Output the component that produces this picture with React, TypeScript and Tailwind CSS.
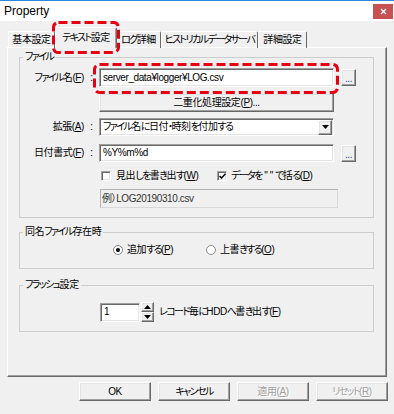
import React from "react";

const sunken =
  "border border-t-[#a0a0a0] border-l-[#a0a0a0] border-r-white border-b-white shadow-[inset_1px_1px_0_#696969,inset_-1px_-1px_0_#e3e3e3]";
const raised =
  "border border-t-white border-l-white border-r-[#696969] border-b-[#696969] shadow-[inset_-1px_-1px_0_#a0a0a0,inset_1px_1px_0_#e3e3e3]";

const rootCls =
  'relative w-[394px] h-[414px] bg-[#f0f0f0] overflow-hidden text-[10px] leading-[14px] tracking-[-0.4px] text-black font-["Liberation_Sans","Noto_Sans_CJK_JP",sans-serif] [font-feature-settings:"palt"]';

/* Japanese text: kana runs are set tighter, like the narrow UI font of the original */
function J({ t }: { t: string }) {
  const parts = t.split(/([\u3040-\u30ff]+)/);
  return (
    <>
      {parts.map((p, i) =>
        /[\u3040-\u30ff]/.test(p) ? (
          <span key={i} className="tracking-[-1.6px]">
            {p}
          </span>
        ) : (
          <React.Fragment key={i}>{p}</React.Fragment>
        )
      )}
    </>
  );
}

function U({ children }: { children: React.ReactNode }) {
  return <span className="underline underline-offset-[1px]">{children}</span>;
}

function Down() {
  return (
    <svg width="7" height="4" viewBox="0 0 7 4">
      <path d="M0 0H7L3.5 4Z" fill="#000" />
    </svg>
  );
}
function Up() {
  return (
    <svg width="7" height="4" viewBox="0 0 7 4">
      <path d="M0 4H7L3.5 0Z" fill="#000" />
    </svg>
  );
}

export default function App() {
  return (
    <div className={rootCls}>
      <div className="h-px bg-[#2b88d8]" />
      {/* title bar */}
      <div className="h-[20px] bg-white flex items-start justify-between">
        <span className="pl-[4px] pt-[3px] text-[12px] leading-[14px] tracking-normal">Property</span>
        <div className="mt-[3px] mr-[1px] w-[20px] h-[15px] bg-[#c75050] flex items-center justify-center">
          <svg width="7" height="7" viewBox="0 0 7 7">
            <path d="M1 1L6 6M6 1L1 6" stroke="white" strokeWidth="1.4" />
          </svg>
        </div>
      </div>

      {/* tabs */}
      <div className="flex items-end h-[27px] pl-[8px] whitespace-nowrap">
        <div className="w-[47px] h-[17px] flex items-start justify-center pt-[1px] border-t border-l border-r border-t-white border-l-white border-r-[#696969] rounded-t-[2px]">
          基本設定
        </div>
        <div className="relative z-10 w-[62px] h-[21px] flex items-start justify-center pt-[3px] bg-[#f0f0f0] border-t border-l border-r border-t-white border-l-white border-r-[#696969] rounded-t-[2px] shadow-[inset_-1px_0_0_#a0a0a0]">
          <J t="テキスト設定" />
        </div>
        <div className="w-[44px] h-[17px] flex items-start justify-center pt-[1px] border-t border-r border-t-white border-r-[#696969] rounded-t-[2px]">
          <J t="ログ詳細" />
        </div>
        <div className="w-[97px] h-[17px] flex items-start justify-center pt-[1px] border-t border-l border-r border-t-white border-l-white border-r-[#696969] rounded-t-[2px]">
          <J t="ヒストリカルデータサーバ" />
        </div>
        <div className="w-[49px] h-[17px] flex items-start justify-center pt-[1px] border-t border-l border-r border-t-white border-l-white border-r-[#696969] rounded-t-[2px]">
          詳細設定
        </div>
      </div>

      {/* panel */}
      <div className="-mt-[1px] ml-[7px] w-[380px] h-[330px] border border-t-white border-l-white border-r-[#696969] border-b-[#696969] shadow-[inset_-1px_-1px_0_#a0a0a0]">
        {/* File group */}
        <fieldset className="mt-[2px] ml-[11px] w-[355px] border border-[#cdcdcd] pb-[9px]">
          <legend className="ml-[3px] px-[2px] leading-[14px]">
            <J t="ファイル" />
          </legend>
          <div className="mt-[4px] flex items-center h-[19px]">
            <span className="w-[64px] text-right whitespace-nowrap">
              <J t="ファイル名" />(<U>F</U>)
            </span>
            <span className="w-[15px] text-center">:</span>
            <div className={`w-[235px] h-[19px] bg-white px-[3px] flex items-center ${sunken}`}>
              server_data¥logger¥LOG.csv
            </div>
            <div className={`ml-[7px] w-[15px] h-[17px] flex items-end justify-center pb-[2px] leading-[8px] text-[#1c3f8f] ${raised}`}>
              ...
            </div>
          </div>
          <div className={`mt-[6px] ml-[79px] w-[235px] h-[19px] flex items-center justify-center ${raised}`}>
            二重化処理設定(<U>P</U>)...
          </div>
          <div className="mt-[6px] flex items-center h-[18px]">
            <span className="w-[64px] text-right">
              拡張(<U>A</U>)
            </span>
            <span className="w-[15px] text-center">:</span>
            <div className={`w-[235px] h-[18px] bg-white flex items-center justify-between pl-[3px] pr-[1px] ${sunken}`}>
              <span className="whitespace-nowrap">
                <J t="ファイル名に日付・時刻を付加する" />
              </span>
              <div className={`w-[14px] h-[15px] flex items-center justify-center bg-[#f0f0f0] ${raised}`}>
                <Down />
              </div>
            </div>
          </div>
          <div className="mt-[8px] flex items-center h-[18px]">
            <span className="w-[64px] text-right whitespace-nowrap">
              日付書式(<U>F</U>)
            </span>
            <span className="w-[15px] text-center">:</span>
            <div className={`w-[235px] h-[18px] bg-white px-[3px] flex items-center ${sunken}`}>%Y%m%d</div>
            <div className={`ml-[7px] w-[15px] h-[17px] flex items-end justify-center pb-[2px] leading-[8px] text-[#1c3f8f] ${raised}`}>
              ...
            </div>
          </div>
          <div className="mt-[7px] flex items-center h-[14px] whitespace-nowrap">
            <div className={`ml-[81px] w-[10px] h-[10px] bg-white ${sunken}`} />
            <span className="ml-[5px] w-[101px]">
              <J t="見出しを書き出す" />(<U>W</U>)
            </span>
            <div className={`w-[10px] h-[10px] bg-white flex items-center justify-center ${sunken}`}>
              <svg width="7" height="6" viewBox="0 0 7 6">
                <path d="M0.5 3L2.5 5L6.5 0.8" stroke="#000" strokeWidth="1.5" fill="none" />
              </svg>
            </div>
            <span className="ml-[4px]">
              <J t="データを" /> " " <J t="で括る" />(<U>D</U>)
            </span>
          </div>
          <div className="mt-[6px] ml-[80px] w-[238px] h-[19px] flex items-center pl-[1px] text-[#333] border border-[#d9d9d9] border-t-[#b4b4b4] border-l-[#b4b4b4] whitespace-nowrap">
            例）LOG20190310.csv
          </div>
        </fieldset>

        {/* Same name group */}
        <fieldset className="mt-[7px] ml-[11px] w-[355px] border border-[#cdcdcd] pb-[11px]">
          <legend className="ml-[3px] px-[2px] leading-[14px]">
            <J t="同名ファイル存在時" />
          </legend>
          <div className="mt-[4px] flex items-center h-[14px] whitespace-nowrap">
            <div className="ml-[93px] w-[10px] h-[10px] rounded-full bg-white border border-[#8a8a8a] flex items-center justify-center">
              <div className="w-[4px] h-[4px] rounded-full bg-black" />
            </div>
            <span className="ml-[4px] w-[79px]">
              <J t="追加する" />(<U>P</U>)
            </span>
            <div className="w-[10px] h-[10px] rounded-full bg-white border border-[#8a8a8a]" />
            <span className="ml-[4px]">
              <J t="上書きする" />(<U>O</U>)
            </span>
          </div>
        </fieldset>

        {/* Flush group */}
        <fieldset className="mt-[9px] ml-[11px] w-[355px] border border-[#cdcdcd] pb-[9px]">
          <legend className="ml-[3px] px-[2px] leading-[14px]">
            <J t="フラッシュ設定" />
          </legend>
          <div className="mt-[10px] flex items-center h-[20px] whitespace-nowrap">
            <div className={`ml-[80px] w-[40px] h-[19px] bg-white px-[3px] flex items-center ${sunken}`}>1</div>
            <div className="ml-[1px] w-[13px] h-[20px] flex flex-col">
              <div className={`h-[10px] flex items-center justify-center ${raised}`}>
                <Up />
              </div>
              <div className={`h-[10px] flex items-center justify-center ${raised}`}>
                <Down />
              </div>
            </div>
            <span className="ml-[5px]">
              <J t="レコード毎にHDDへ書き出す" />(<U>F</U>)
            </span>
          </div>
        </fieldset>
      </div>

      {/* bottom buttons */}
      <div className="mt-[5px] flex justify-end gap-[7px] pr-[6px] whitespace-nowrap">
        <div className={`w-[72px] h-[19px] flex items-center justify-center ${raised}`}>OK</div>
        <div className={`w-[72px] h-[19px] flex items-center justify-center ${raised}`}>
          <J t="キャンセル" />
        </div>
        <div className={`w-[72px] h-[19px] flex items-center justify-center text-[#a0a0a0] [text-shadow:1px_1px_0_#fff] ${raised}`}>
          適用(<U>A</U>)
        </div>
        <div className={`w-[72px] h-[19px] flex items-center justify-center text-[#a0a0a0] [text-shadow:1px_1px_0_#fff] ${raised}`}>
          <J t="リセット" />(<U>R</U>)
        </div>
      </div>

      {/* red dashed highlights */}
      <svg className="absolute left-[52px] top-[21px] z-20" width="68" height="33" viewBox="0 0 68 33">
        <rect x="1.5" y="1.5" width="65" height="30" rx="5" fill="none" stroke="#e60012" strokeWidth="3" strokeDasharray="9 4" />
      </svg>
      <svg className="absolute left-[93px] top-[63px] z-20" width="246" height="31" viewBox="0 0 246 31">
        <rect x="1.5" y="1.5" width="243" height="28" rx="5" fill="none" stroke="#e60012" strokeWidth="3" strokeDasharray="9 4" />
      </svg>
    </div>
  );
}
